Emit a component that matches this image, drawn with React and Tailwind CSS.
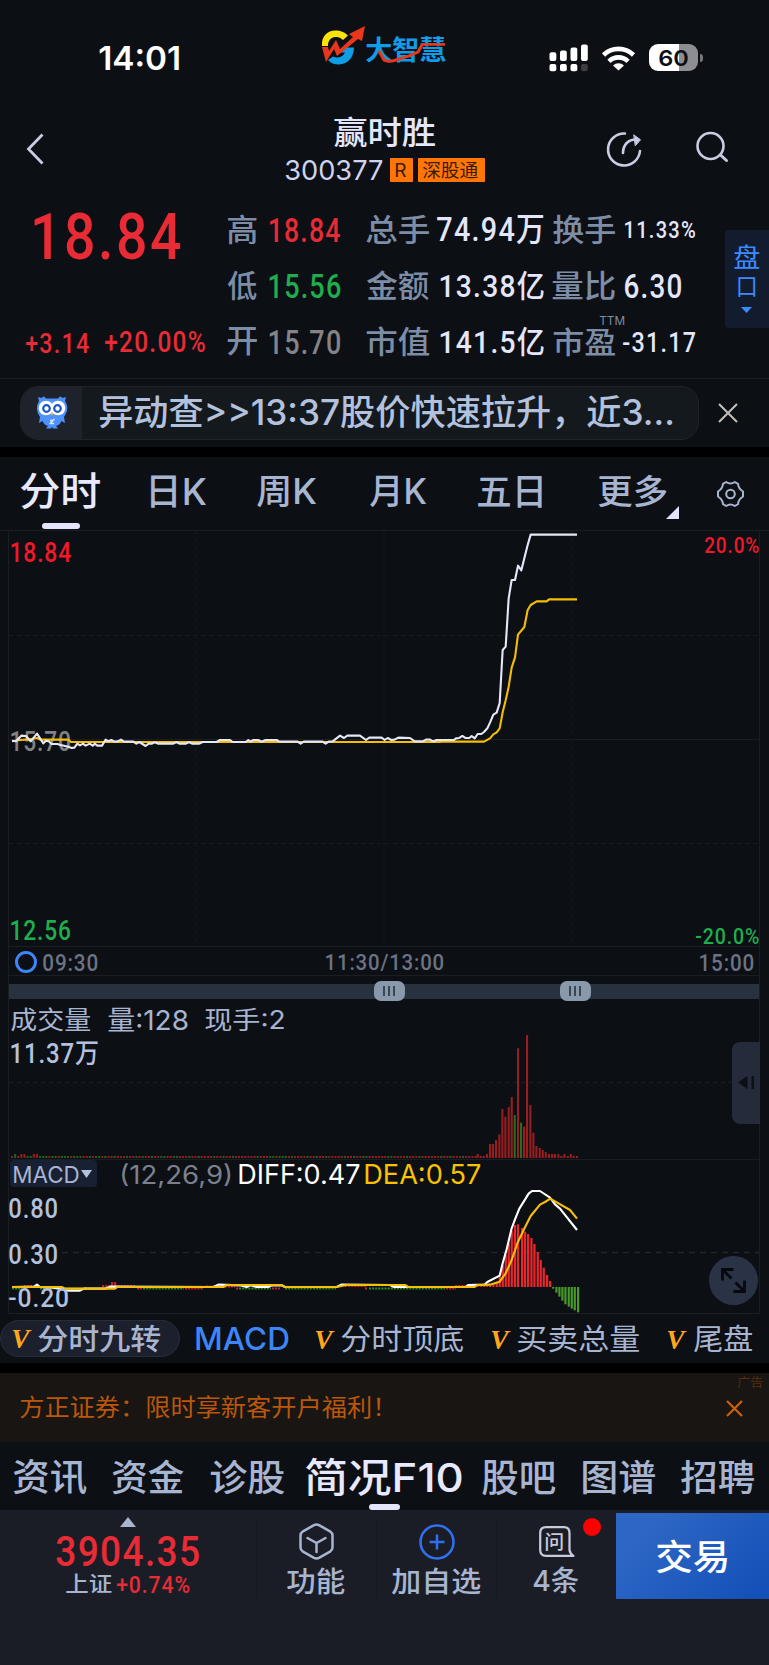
import { useLayoutEffect, useRef } from "react";

const DIN = "font-['Roboto','Noto_Sans_CJK_SC',sans-serif]";
const SF = "font-['Inter','Noto_Sans_CJK_SC',sans-serif]";

// Text whose glyphs are fitted to the box given by the width and height classes.
function Ink({ children, className = "", font = SF }) {
  const box = useRef(null);
  const text = useRef(null);
  useLayoutEffect(() => {
    const cs = getComputedStyle(text.current);
    const ctx = document.createElement("canvas").getContext("2d");
    ctx.font = `${cs.fontStyle} ${cs.fontWeight} ${cs.fontSize} ${cs.fontFamily}`;
    if (cs.letterSpacing !== "normal") ctx.letterSpacing = cs.letterSpacing;
    const m = ctx.measureText(children);
    const size = parseFloat(cs.fontSize);
    const asc = m.fontBoundingBoxAscent;
    const base = (size - asc - m.fontBoundingBoxDescent) / 2 + asc;
    const left = -m.actualBoundingBoxLeft;
    const sx = box.current.clientWidth / (m.actualBoundingBoxRight - left);
    const sy = box.current.clientHeight / (m.actualBoundingBoxAscent + m.actualBoundingBoxDescent);
    const top = base - m.actualBoundingBoxAscent;
    text.current.style.transform = `matrix(${sx},0,0,${sy},${-left * sx - 0.8},${-top * sy})`;
  }, [children]);
  return (
    <span ref={box} className={`block shrink-0 leading-none whitespace-nowrap ${font} ${className}`}>
      <span ref={text} className="block w-max origin-top-left">{children}</span>
    </span>
  );
}

function StatusBar() {
  return (
    <div className="flex h-[115px] shrink-0 items-center pl-[100px]">
      <Ink className="h-[24px] w-[79.500px] text-[33px] font-semibold text-white">14:01</Ink>
      <svg className="mt-[25px] ml-[141.500px] h-[40px] w-[45px] shrink-0 self-start" viewBox="0 0 45 40">
        <path d="M1 21 C0 11 7 5.500 14 5.500 C20 5.500 24 7.500 27 10.500 L22 15 C19.500 12.500 17 11.500 14 12 C9.500 12.500 7 16 7 21 Z" fill="#fde30a" />
        <path d="M7 35 L12 31.500 C16 34 22 32 24 27.500 L18.500 27.500 L22 22.500 L33 22.500 C33 32 27 39 18 39.500 C13.500 39.500 9.500 38 7 35 Z" fill="#109de8" />
        <path d="M1 22 L7 22 L8 26 L15 15 L19 24 L32 12 L28 9 L44 1 L41 16 L37 14 L16 31 L13 24 L5 37 Z" fill="#e8371c" />
      </svg>
      <div className="relative mt-[36px] ml-[-0.500px] h-[27px] w-[81px] shrink-0 self-start">
        <Ink className="h-[27px] w-[81px] text-[27px] font-bold text-[#109de8]">大智慧</Ink>
        <svg className="absolute top-0 left-0 h-[28px] w-[82px]" viewBox="0 0 82 28">
          <path d="M13 15 L18 24 Q22 26.500 30 24 Q44 20 52 16 L56 9" fill="none" stroke="#e8371c" strokeWidth="3" />
          <path d="M55 8.500 H79" stroke="#e8371c" strokeWidth="2.500" />
        </svg>
      </div>
      <svg className="ml-[102.500px] h-[28px] w-[40px] shrink-0" viewBox="551 43.500 40 28">
        <g fill="#fff">
          <rect x="551.500" y="51.700" width="6.800" height="8.800" rx="2" />
          <rect x="562" y="50" width="6.800" height="10.500" rx="2" />
          <rect x="572.500" y="47" width="6.800" height="13.500" rx="2" />
          <rect x="583" y="44" width="6.800" height="16.500" rx="2" />
          <rect x="551.500" y="63.500" width="6.800" height="7.200" rx="2" />
          <rect x="562" y="63.500" width="6.800" height="7.200" rx="2" />
          <rect x="572.500" y="63.500" width="6.800" height="7.200" rx="2" />
        </g>
        <rect x="583" y="63.500" width="6.800" height="7.200" rx="2" fill="#3b3d41" />
      </svg>
      <svg className="ml-[12px] h-[26px] w-[35px] shrink-0" viewBox="603 44.500 35 26">
        <g fill="none" stroke="#fff" strokeWidth="4.600">
          <path d="M605.500 54.500 A 21.500 21.500 0 0 1 635.500 54.500" />
          <path d="M611 60.800 A 13.500 13.500 0 0 1 630 60.800" />
        </g>
        <path d="M615 65 A 8 8 0 0 1 626 65 L620.500 70 Z" fill="#fff" />
      </svg>
      <div className="relative ml-[13px] flex h-[27px] w-[49px] shrink-0 items-center rounded-[9px] bg-[linear-gradient(90deg,#fff_61%,#8d8e91_61%)] pl-[10.500px]">
        <Ink className="h-[16px] w-[29px] text-[22px] font-semibold text-[#0c0f14]">60</Ink>
      </div>
      <div className="ml-[2px] h-[8px] w-[3px] rounded-r-full bg-[#77787b]" />
    </div>
  );
}

function TitleBar() {
  return (
    <div className="flex h-[68px] shrink-0 items-center">
      <svg className="ml-[26px] h-[32px] w-[18px] shrink-0" viewBox="0 0 18 32" fill="none" stroke="#c9cde3" strokeWidth="2.800">
        <path d="M16.500 1.500 L2.500 16 L16.500 30.500" />
      </svg>
      <div className="ml-[242px] flex h-[68px] w-[199px] shrink-0 flex-col items-center pt-[1px]">
        <Ink className="h-[32px] w-[101px] text-[34px] font-medium text-[#e4e6fb]">赢时胜</Ink>
        <div className="mt-[10px] flex w-[199px] items-center">
          <Ink className="h-[20px] w-[96.500px] text-[27px] text-[#cfd4ee]">300377</Ink>
          <span className="ml-[7px] flex h-[24px] w-[23.500px] shrink-0 items-center justify-center rounded-[1px] bg-[#ff7606]">
            <Ink className="h-[14px] w-[10.500px] text-[19px] text-[#3a1c04]">R</Ink>
          </span>
          <span className="ml-[5px] flex h-[24px] w-[66.500px] shrink-0 items-center justify-center rounded-[1px] bg-[#ff7606]">
            <Ink className="h-[18px] w-[56px] text-[19px] text-[#3a1c04]">深股通</Ink>
          </span>
        </div>
      </div>
      <svg className="ml-[119.500px] h-[37px] w-[38px] shrink-0" viewBox="0 0 38 37" fill="none" stroke="#c9cde3" strokeWidth="2.600" strokeLinecap="round">
        <path d="M20 2.500 A 16 16 0 1 0 35 20" />
        <path d="M18 22 C18 14 23 8.500 31 8.500" />
        <path d="M29 4 L35.500 8.800 L30.500 14.500 Z" fill="#c9cde3" strokeWidth="1" />
      </svg>
      <svg className="mt-[-5px] ml-[52px] h-[32px] w-[34px] shrink-0" viewBox="0 0 34 32" fill="none" stroke="#c9cde3" strokeWidth="2.600" strokeLinecap="round">
        <circle cx="15.500" cy="15" r="13" />
        <path d="M25.500 24 L31.500 29.500" strokeWidth="3" />
      </svg>
    </div>
  );
}

const LABEL = "text-[#7d8da6] text-[31px] font-medium";
const VAL = "text-[34px] font-medium tracking-[1.500px]";

function Quote() {
  return (
    <div className="flex h-[195px] shrink-0 pt-[18.500px]">
      <div className="w-[228px] shrink-0 pt-[9px] pl-[26px]">
        <Ink font={DIN} className="ml-[9px] h-[48.500px] w-[146px] text-[66px] font-medium tracking-[3px] text-[#e82b34]">18.84</Ink>
        <div className="mt-[73px] flex items-center">
          <Ink font={DIN} className="h-[20px] w-[63.500px] text-[28px] font-medium tracking-[1.500px] text-[#e82b34]">+3.14</Ink>
          <Ink font={DIN} className="ml-[15.500px] h-[21px] w-[101px] text-[28px] font-medium tracking-[1.500px] text-[#e82b34]">+20.00%</Ink>
        </div>
      </div>
      <div className="flex w-[497px] shrink-0 flex-col">
        <div className="flex h-[56px] items-center">
          <Ink className={`h-[31px] w-[30px] ${LABEL}`}>高</Ink>
          <Ink font={DIN} className={`ml-[11.500px] h-[24px] w-[71px] text-[#e82b34] ${VAL}`}>18.84</Ink>
          <Ink className={`ml-[26px] h-[31px] w-[62.500px] ${LABEL}`}>总手</Ink>
          <Ink font={DIN} className={`ml-[8.500px] h-[29.500px] w-[106px] text-[#e4e6fb] ${VAL}`}>74.94万</Ink>
          <Ink className={`ml-[9.500px] h-[31px] w-[63px] ${LABEL}`}>换手</Ink>
          <Ink font={DIN} className="ml-[9.500px] h-[17px] w-[70px] text-[24px] font-medium tracking-[1.500px] text-[#e4e6fb]">11.33%</Ink>
        </div>
        <div className="flex h-[56px] items-center">
          <Ink className={`h-[31px] w-[30px] ${LABEL}`}>低</Ink>
          <Ink font={DIN} className={`ml-[11.500px] h-[24px] w-[71px] text-[#1fae4d] ${VAL}`}>15.56</Ink>
          <Ink className={`ml-[26px] h-[31px] w-[62.500px] ${LABEL}`}>金额</Ink>
          <Ink font={DIN} className={`ml-[11.500px] h-[30.500px] w-[104px] text-[#e4e6fb] ${VAL}`}>13.38亿</Ink>
          <Ink className={`ml-[8.500px] h-[31px] w-[63px] ${LABEL}`}>量比</Ink>
          <Ink font={DIN} className={`ml-[9px] h-[24px] w-[56.500px] text-[#e4e6fb] ${VAL}`}>6.30</Ink>
        </div>
        <div className="relative flex h-[56px] items-center">
          <Ink className={`h-[29px] w-[30px] ${LABEL}`}>开</Ink>
          <Ink font={DIN} className={`ml-[11.500px] h-[24px] w-[71px] text-[#838388] ${VAL}`}>15.70</Ink>
          <Ink className={`ml-[26px] h-[31px] w-[62.500px] ${LABEL}`}>市值</Ink>
          <Ink font={DIN} className={`ml-[11.500px] h-[30.500px] w-[104px] text-[#e4e6fb] ${VAL}`}>141.5亿</Ink>
          <Ink className={`ml-[9.500px] h-[30px] w-[61.500px] ${LABEL}`}>市盈</Ink>
          <Ink font={DIN} className="ml-[8.500px] h-[20px] w-[71.500px] text-[28px] font-medium tracking-[1.500px] text-[#e4e6fb]">-31.17</Ink>
          <div className="absolute top-[2px] left-[371.500px]">
            <Ink className="h-[9px] w-[25px] text-[12px] text-[#7d8da6]">TTM</Ink>
          </div>
        </div>
      </div>
      <div className="mt-[28.500px] flex h-[98px] w-[44px] shrink-0 flex-col items-center rounded-l-[4px] bg-[#131c2f] pt-[14px]">
        <Ink className="h-[25px] w-[24.500px] text-[26px] text-[#3b8bff]">盘</Ink>
        <Ink className="mt-[8px] h-[19.500px] w-[16.500px] text-[26px] text-[#3b8bff]">口</Ink>
        <svg className="mt-[10.500px] mr-px h-[6px] w-[11px]" viewBox="0 0 11 6"><path d="M0 0 H11 L5.500 6 Z" fill="#3b8bff" /></svg>
      </div>
    </div>
  );
}

function Owl() {
  return (
    <svg className="h-[33px] w-[32px]" viewBox="0 0 32 33">
      <path d="M2 1 L5 2 L8 0.500 L10 2.500 H22 L24 0.500 L27 2 L30 1 L29 5 Q32 9 31 15 Q29 19 28 21 L29 27 L25.500 25 Q24 29 20 30 L22 32.500 H17 L16 31 L15 32.500 H10 L12 30 Q8 29 6.500 25 L3 27 L4 21 Q1 17 1 13 Q1 8 3 5 Z" fill="#4d92ff" />
      <circle cx="10" cy="12" r="7.300" fill="#fff" /><circle cx="22" cy="12" r="7.300" fill="#fff" />
      <circle cx="10.500" cy="12.500" r="3.300" fill="#fff" stroke="#1b55c9" strokeWidth="2.200" />
      <circle cx="21.500" cy="12.500" r="3.300" fill="#fff" stroke="#1b55c9" strokeWidth="2.200" />
      <path d="M14.500 17 H17.500 L16 20 Z" fill="#ffb03a" />
      <path d="M13.500 28 L18.500 23 M14 24.500 H17 M15 27.500 H18" stroke="#dbe8ff" strokeWidth="1.400" />
    </svg>
  );
}

function Notice() {
  return (
    <div className="flex h-[69px] shrink-0 items-center border-t border-[#1a1d22] pb-px pl-[20px]">
      <div className="flex h-[54px] w-[679px] shrink-0 items-center overflow-hidden rounded-[18px] border border-[#1f2429] bg-[#14191d]">
        <div className="flex h-full w-[61px] shrink-0 items-center justify-center bg-[#1e222b]"><Owl /></div>
        <Ink className="ml-[17.500px] h-[35.500px] w-[574px] text-[34px] font-medium text-[#b3c1dd]">异动查&gt;&gt;13:37股价快速拉升，近3...</Ink>
      </div>
      <svg className="ml-[19px] h-[20px] w-[20px]" viewBox="0 0 20 20" stroke="#c3c0bb" strokeWidth="2"><path d="M1 1 L19 19 M19 1 L1 19" /></svg>
    </div>
  );
}

const PERIOD = "text-[36px] font-medium text-[#a8b5d1]";
function Periods() {
  return (
    <div className="relative flex h-[73px] shrink-0 items-start pl-[20.500px]">
      <div className="flex flex-col items-center pt-[15px]">
        <Ink className="h-[38px] w-[79.500px] text-[40px] font-medium text-[#e8e9fd]">分时</Ink>
        <div className="mt-[13px] ml-[2px] h-[6px] w-[38px] rounded-full bg-[#e4e4fb]" />
      </div>
      <Ink className={`mt-[18px] ml-[52px] h-[33px] w-[55px] ${PERIOD}`}>日K</Ink>
      <Ink className={`mt-[18px] ml-[51px] h-[33px] w-[59px] ${PERIOD}`}>周K</Ink>
      <Ink className={`mt-[18px] ml-[53px] h-[33px] w-[57px] ${PERIOD}`}>月K</Ink>
      <Ink className={`mt-[18.500px] ml-[50.500px] h-[32px] w-[65px] ${PERIOD}`}>五日</Ink>
      <Ink className={`mt-[17px] ml-[56px] h-[34px] w-[69px] ${PERIOD}`}>更多</Ink>
      <svg className="mt-[48.500px] ml-[-1.500px] h-[13px] w-[13px]" viewBox="0 0 13 13"><path d="M13 0 V13 H0 Z" fill="#e4e4fb" /></svg>
      <svg className="mt-[23px] ml-[36.500px] h-[28px] w-[29px]" viewBox="0 0 29 28" fill="none" stroke="#a8b5d1" strokeWidth="2">
        <path strokeLinejoin="round" d="M10.200 2 Q14.500 5 18.800 2 L22 3.800 Q22.300 8.600 27 11.500 V16.500 Q22.300 19.400 22 24.200 L18.800 26 Q14.500 23 10.200 26 L7 24.200 Q6.700 19.400 2 16.500 V11.500 Q6.700 8.600 7 3.800 Z" />
        <circle cx="14.500" cy="14" r="4.300" />
      </svg>
    </div>
  );
}

function PriceChart() {
  return (
    <div className="relative h-[416px] shrink-0">
      <svg className="block h-[416px] w-[769px]" viewBox="0 530 769 416" fill="none">
        <g stroke="#1a1e23">
          <path d="M0 530.500 H769 M8.500 530 V946 M759.500 530 V946 M9 739.500 H759" />
          <path d="M9 635.500 H759 M9 843.500 H759 M196 531 V946 M384 531 V946 M572 531 V946" strokeDasharray="4 4" stroke="#171b20" />
        </g>
      </svg>
      <div className="absolute top-[11.500px] left-[11.500px]"><Ink font={DIN} className="h-[19.500px] w-[60px] text-[28px] font-medium tracking-[1px] text-[#f0182a]">18.84</Ink></div>
      <div className="absolute top-[201px] left-[12px]"><Ink font={DIN} className="h-[19.500px] w-[59px] text-[28px] font-medium tracking-[1px] text-[#808186]">15.70</Ink></div>
      <div className="absolute top-[390px] left-[12px]"><Ink font={DIN} className="h-[20px] w-[59px] text-[28px] font-medium tracking-[1px] text-[#1fae4d]">12.56</Ink></div>
      <div className="absolute top-[7px] left-[705px]"><Ink font={DIN} className="h-[16px] w-[55px] text-[22px] font-medium tracking-[1px] text-[#f0182a]">20.0%</Ink></div>
      <div className="absolute top-[398px] left-[696px]"><Ink font={DIN} className="h-[15.500px] w-[64px] text-[22px] font-medium tracking-[1px] text-[#1fae4d]">-20.0%</Ink></div>
      <svg className="absolute top-0 left-0 h-[416px] w-[769px]" viewBox="0 530 769 416" fill="none" strokeWidth="6.300" strokeLinejoin="round">
        <g stroke="#f5be00">
          <path transform="translate(0 700) scale(.33333)" d="M36 124 60 120 90 118 111 114 120 119 205 119 213 126 1322 126" />
          <path transform="translate(440 520) scale(.33333)" d="M0 665 132 665 150 655 160 643 170 637 179 625 188 577 197 541 206 500 215 443 225 412 234 344 253 321 263 270 272 255 290 244 320 244 327 238 411 238" />
        </g>
        <g stroke="#e6e8fa">
          <path transform="translate(0 700) scale(.33333)" d="M36 122 48 124 64 107 78 108 92 124 111 101 130 130 138 122 146 124 155 132 172 132 182 135 205 140 215 144 223 143 232 131 240 136 249 131 257 137 269 131 278 137 284 131 292 137 306 137 317 119 325 124 334 120 344 125 353 124 363 119 372 125 400 125 409 131 418 126 437 138 446 131 455 131 464 127 475 131 520 131 530 126 538 131 558 131 567 126 576 131 598 131 608 126 650 126 660 120 690 120 698 126 737 126 745 120 752 125 760 120 775 120 784 125 797 120 830 120 838 125 893 125 902 131 911 125 968 125 977 131 986 125 998 124 1020 107 1032 114 1042 107 1080 107 1098 120 1108 113 1145 113 1154 120 1163 114 1174 120 1184 119 1195 113 1230 114 1244 124 1268 124 1278 119 1290 119 1300 124 1310 120 1322 120" />
          <path transform="translate(440 520) scale(.33333)" d="M0 660 42 660 48 655 58 654 67 648 76 654 88 654 95 648 104 655 113 642 124 642 132 636 142 625 150 608 160 584 170 578 179 549 188 390 197 380 206 235 215 180 225 180 234 137 244 151 253 115 263 75 272 44 411 44" />
        </g>
      </svg>
    </div>
  );
}

function Handle({ className }) {
  return (
    <div className={`flex h-[20.500px] w-[30.500px] items-center justify-center gap-[3px] rounded-[7px] bg-[#8998aa] ${className}`}>
      <i className="h-[10px] w-[2px] bg-[#3b4655]" /><i className="h-[10px] w-[2px] bg-[#3b4655]" /><i className="h-[10px] w-[2px] bg-[#3b4655]" />
    </div>
  );
}

function TimeAxis() {
  return (
    <div className="mr-[9px] ml-[8px] h-[56px] shrink-0 border-x border-t border-[#1a1e23]">
      <div className="flex h-[29px] items-center border-b border-[#1a1e23] pt-[2px] pl-[6px]">
        <span className="mt-[-1px] h-[22px] w-[22px] shrink-0 rounded-full border-[3px] border-[#3d86f7]" />
        <Ink font={DIN} className="ml-[7px] h-[17.500px] w-[53.500px] text-[25px] font-medium tracking-[1px] text-[#6b7384]">09:30</Ink>
        <Ink font={DIN} className="ml-[229px] h-[18px] w-[116.500px] text-[25px] font-medium tracking-[1px] text-[#6b7384]">11:30/13:00</Ink>
        <Ink font={DIN} className="ml-[258px] h-[17.500px] w-[52.500px] text-[25px] font-medium tracking-[1px] text-[#6b7384]">15:00</Ink>
      </div>
      <div className="mt-[7.500px] flex h-[15px] items-center bg-[#28323e]">
        <Handle className="ml-[365px]" />
        <Handle className="ml-[155.500px]" />
      </div>
    </div>
  );
}

const PEAKS = [
  [326, 702], [335, 708], [344, 708], [354, 702], [363, 672], [372, 672], [381, 660], [391, 643], [400, 567], [409, 590], [419, 561],
  [428, 531], [437, 585, 1], [447, 385], [456, 608, 1], [465, 620], [474, 345], [484, 555], [493, 638], [502, 678], [512, 684],
  [521, 690], [530, 696], [540, 702], [549, 702], [558, 702], [568, 702], [577, 708], [586, 702], [596, 708], [605, 702], [614, 708], [624, 708],
];
const FLAT = "rgrrrggrrgggrggrgggrgggrrgrggrgrrgrrrgrrgrgrrgrrggrrggrrrgrrgrrrrgrrgrrgrrrrrrrgrrrggrgggrgrrrrgrrgrrgrrrrrgrrgrrggrrrrrrggrrrrgrrrgrrrrrrgrrgrrrgrrrrgrr";
const TALL = [1, 3, 4, 7, 8];

function Volume() {
  return (
    <div className="relative h-[158px] shrink-0">
      <svg className="block h-[158px] w-[769px]" viewBox="0 1002 769 158" fill="none">
        <path d="M8.500 1002 V1160 M759.500 1002 V1160 M8 1159.500 H760" stroke="#1a1e23" />
        <path d="M9 1082.500 H759" stroke="#1a1e23" strokeDasharray="4 4" />
        {[...FLAT].map((c, i) =>
          11 + i * 3.11 < 475 ? (
            <rect key={i} x={11 + i * 3.11} y={TALL.includes(i) ? 1154 : 1156} width="2.100" height={TALL.includes(i) ? 4 : 2} fill={c === "r" ? "#8e1d20" : "#23601c"} />
          ) : null,
        )}
        {PEAKS.map(([x, y, g]) => (
          <rect key={x} x={368 + x / 3} y={920 + y / 3} width="2.100" height={(714 - y) / 3} fill={g ? "#2e6a1d" : "#971d20"} />
        ))}
      </svg>
      <div className="absolute top-[5px] left-[11px] flex items-center">
        <Ink className="h-[25px] w-[80px] text-[27px] text-[#a8b5d1]">成交量</Ink>
        <Ink className="ml-[18px] h-[25px] w-[80px] text-[27px] text-[#a8b5d1]">量:128</Ink>
        <Ink className="ml-[16.500px] h-[25px] w-[78.500px] text-[27px] text-[#a8b5d1]">现手:2</Ink>
      </div>
      <div className="absolute top-[39px] left-[12px]"><Ink font={DIN} className="h-[25px] w-[86.500px] text-[28px] font-medium tracking-[1px] text-[#b3c1dd]">11.37万</Ink></div>
      <div className="absolute top-[39.500px] left-[731.500px] flex h-[82px] w-[28px] items-center rounded-l-[8px] bg-[#252b3a] pl-[6.500px]">
        <svg className="h-[13px] w-[17px]" viewBox="0 0 17 13"><path d="M0 6.500 L9.500 0 V13 Z M13.500 0 H16 V13 H13.500 Z" fill="#0c0f14" /></svg>
      </div>
    </div>
  );
}

const MACD_BARS = [
  [150, 437], [160, 433], [170, 425], [179, 410], [188, 375], [197, 345], [206, 310], [215, 272], [225, 255], [234, 253], [246, 264], [255, 275],
  [264, 282], [274, 294], [283, 312], [293, 336], [302, 360], [311, 383], [321, 405], [330, 423], [339, 446], [349, 458], [358, 470], [367, 482],
  [376, 493], [386, 500], [395, 506], [404, 511], [414, 517],
];

function Macd() {
  return (
    <div className="relative h-[154px] shrink-0">
      <svg className="block h-[154px] w-[769px]" viewBox="0 1160 769 154" fill="none">
        <path d="M8.500 1160 V1314 M759.500 1160 V1314 M8 1313.500 H760" stroke="#1a1e23" />
        <path d="M62 1252.500 H759" stroke="#21262b" strokeWidth="1.500" strokeDasharray="6 5" />
        <g strokeWidth="2" strokeDasharray="2.100 1">
          <path d="M24 1286 H32 M102 1286 H135 M206 1286.500 H235 M345 1286 H366 M455 1286 H490" stroke="#c3242a" />
          <path d="M111 1284 H117" stroke="#c3242a" strokeWidth="4" />
          <path d="M137 1288.500 H142 M185 1288.500 H203 M236 1288.500 H239 M272 1288.500 H280 M365 1288.500 H368 M446 1288.500 H456" stroke="#c3242a" />
          <path d="M12 1288.500 H22 M40 1288.500 H86 M143 1288.500 H184 M239 1288.500 H271 M285 1288.500 H336 M369 1288.500 H445" stroke="#2f8a25" />
        </g>
        {MACD_BARS.map(([x, y]) => (
          <rect key={x} x={439 + x / 3} y={y < 441 ? 1140 + y / 3 : 1287} width="2.200" height={Math.abs(441 - y) / 3} fill={y < 441 ? "#ea262b" : "#46992a"} />
        ))}
        <g strokeWidth="6.300" strokeLinejoin="round">
          <path stroke="#fff" transform="translate(0 1200) scale(.33333)" d="M36 261 102 260 111 254 120 261 160 263 180 266 205 272 240 272 252 266 315 266 330 260 640 261 655 254 720 256 740 261 752 256 770 261 805 261 815 256 845 256 855 261 1010 261 1024 254 1170 255 1182 261 1320 261" />
          <path stroke="#fff" transform="translate(440 1140) scale(.33333)" d="M0 441 78 441 84 435 133 434 142 426 179 407 188 370 200 328 215 265 225 238 238 206 253 182 266 161 276 153 300 153 330 173 345 193 360 206 411 270" />
          <path stroke="#f7be0a" transform="translate(0 1200) scale(.33333)" d="M36 261 185 261 195 266 345 266 352 261 670 261 680 255 845 255 855 261 1010 261 1040 255 1215 255 1225 261 1322 261" />
          <path stroke="#f7be0a" transform="translate(440 1140) scale(.33333)" d="M0 441 104 441 112 435 150 434 179 425 197 400 215 360 234 305 255 262 272 228 300 194 315 186 331 176 345 184 390 210 411 236" />
        </g>
      </svg>
      <div className="absolute top-0 left-[10px] flex h-[27px] items-center">
        <div className="flex h-[27px] w-[87px] shrink-0 items-center rounded-[4px] bg-[#182033] pt-px pl-[5px]">
          <Ink className="h-[17px] w-[65px] text-[23px] text-[#a8b5d1]">MACD</Ink>
          <svg className="mt-[-1px] ml-[0.500px] h-[8px] w-[11px]" viewBox="0 0 11 8"><path d="M0 0 H11 L5.500 8 Z" fill="#b3c1dd" /></svg>
        </div>
        <Ink className="mt-[5px] ml-[25px] h-[25px] w-[108.500px] text-[27px] text-[#7b818c]">(12,26,9)</Ink>
        <Ink className="mt-[1px] ml-[9px] h-[20px] w-[119.500px] text-[27px] text-white">DIFF:0.47</Ink>
        <Ink className="mt-[1px] ml-[7px] h-[20px] w-[115px] text-[27px] text-[#f8c200]">DEA:0.57</Ink>
      </div>
      <div className="absolute top-[37.500px] left-[9.500px]"><Ink font={DIN} className="h-[19.500px] w-[47.500px] text-[28px] font-medium tracking-[1px] text-[#b3c1dd]">0.80</Ink></div>
      <div className="absolute top-[84px] left-[9.500px]"><Ink font={DIN} className="h-[19.500px] w-[47.500px] text-[28px] font-medium tracking-[1px] text-[#b3c1dd]">0.30</Ink></div>
      <div className="absolute top-[128px] left-[9.500px]"><Ink font={DIN} className="h-[19px] w-[59px] text-[28px] font-medium tracking-[1px] text-[#b3c1dd]">-0.20</Ink></div>
      <div className="absolute top-[96px] left-[709px] flex h-[49px] w-[49px] items-center justify-center rounded-full bg-[#2a3345]">
        <svg className="h-[25px] w-[25px]" viewBox="0 0 25 25" fill="none" stroke="#07090c" strokeWidth="2.800">
          <path d="M12.500 1.500 H1.500 V12.500 M2 2 L10.500 10.500 M12.500 23.500 H23.500 V12.500 M23 23 L14.500 14.500" />
        </svg>
      </div>
    </div>
  );
}

function VMark({ className = "" }) {
  return (
    <Ink font="font-['Liberation_Serif',serif]" className={`h-[17.500px] w-[19.500px] text-[26px] font-bold text-[#ffa51e] italic ${className}`}>V</Ink>
  );
}

const IND = "h-[28.500px] text-[30px] text-[#a8b5d1] mt-[2px]";
function Indicators() {
  return (
    <div className="flex h-[49px] shrink-0 items-center pb-px">
      <div className="flex h-[37px] w-[180px] shrink-0 items-center rounded-full border border-[#262d3a] bg-[#1b202c] pl-[12px]">
        <VMark className="mt-[4px]" />
        <Ink className={`ml-[6.500px] w-[122px] font-medium ${IND}`}>分时九转</Ink>
      </div>
      <Ink className="mt-px ml-[16.500px] h-[22.500px] w-[91.500px] text-[30px] font-medium text-[#3d86f7]">MACD</Ink>
      <VMark className="mt-[5px] ml-[28px]" />
      <Ink className={`ml-[6.500px] w-[122px] ${IND}`}>分时顶底</Ink>
      <VMark className="mt-[5px] ml-[28px]" />
      <Ink className={`ml-[6.500px] w-[122px] ${IND}`}>买卖总量</Ink>
      <VMark className="mt-[5px] ml-[27.500px]" />
      <Ink className={`ml-[6.500px] w-[59px] ${IND}`}>尾盘</Ink>
    </div>
  );
}

function Ad() {
  return (
    <div className="flex h-[69px] shrink-0 items-start bg-[#191512] pl-[21px]">
      <Ink className="mt-[22px] h-[24px] w-[360px] text-[25px] text-[#b9570a]">方正证券：限时享新客开户福利！</Ink>
      <svg className="mt-[27px] ml-[345px] h-[17px] w-[17px] shrink-0" viewBox="0 0 17 17" stroke="#cc610a" strokeWidth="2.200"><path d="M1 1 L16 16 M16 1 L1 16" /></svg>
      <Ink className="mt-[4px] ml-[-5.500px] h-[12.500px] w-[26px] text-[13px] text-[#552c10]">广告</Ink>
    </div>
  );
}

const SEC = "h-[35.500px] text-[37px] font-medium text-[#a8b5d1]";
function Sections() {
  return (
    <div className="flex h-[68px] shrink-0 items-start pl-[14px]">
      <Ink className={`mt-[17px] w-[73px] ${SEC}`}>资讯</Ink>
      <Ink className={`mt-[17px] ml-[26px] w-[72px] ${SEC}`}>资金</Ink>
      <Ink className={`mt-[17px] ml-[26px] w-[73.500px] ${SEC}`}>诊股</Ink>
      <div className="ml-[21.500px] flex shrink-0 flex-col pt-[15px]">
        <Ink className="h-[40px] w-[156.500px] text-[41px] font-medium text-[#e8e9fd]">简况F10</Ink>
        <div className="mt-[7px] ml-[62.500px] h-[6px] w-[31px] rounded-full bg-[#e4e4fb]" />
      </div>
      <Ink className={`mt-[17px] ml-[20.500px] w-[73px] ${SEC}`}>股吧</Ink>
      <Ink className={`mt-[17px] ml-[27px] w-[73px] ${SEC}`}>图谱</Ink>
      <Ink className={`mt-[17px] ml-[25px] w-[74px] ${SEC}`}>招聘</Ink>
    </div>
  );
}

const ACT = "h-[28px] text-[30px] font-medium text-[#a8b5d1]";
function BottomBar() {
  return (
    <div className="flex h-[155px] shrink-0 items-start bg-[#1b1d26]">
      <div className="flex w-[256px] shrink-0 flex-col items-center pt-[7px]">
        <svg className="h-[10px] w-[16px]" viewBox="0 0 16 10"><path d="M8 0 L16 10 H0 Z" fill="#a8b5d1" /></svg>
        <Ink font={DIN} className="mt-[9px] h-[31px] w-[143px] text-[42px] font-medium tracking-[1.500px] text-[#e82b34]">3904.35</Ink>
        <div className="mt-[6px] flex items-center">
          <Ink className="h-[21px] w-[45.500px] text-[22px] font-medium text-[#a8b5d1]">上证</Ink>
          <Ink font={DIN} className="mt-[2px] ml-[5px] h-[17px] w-[72.500px] text-[23px] font-medium tracking-[1px] text-[#e82b34]">+0.74%</Ink>
        </div>
      </div>
      <div className="mt-[10px] flex h-[78px] w-[120px] shrink-0 flex-col items-center border-l border-[#16181f] pt-[3px]">
        <svg className="h-[37px] w-[35px]" viewBox="0 0 35 37" fill="none" stroke="#a8b5d1" strokeWidth="2.500" strokeLinejoin="round" strokeLinecap="round">
          <path d="M15 2.200 Q17.500 1 20 2.200 L31 8.300 Q33.500 10 33.500 12.500 V24.500 Q33.500 27 31 28.700 L20 34.800 Q17.500 36 15 34.800 L4 28.700 Q1.500 27 1.500 24.500 V12.500 Q1.500 10 4 8.300 Z" />
          <path d="M8.500 15 L17.500 20 L26.500 15 M17.500 20 V29" />
        </svg>
        <Ink className={`mt-[7.500px] w-[58.500px] ${ACT}`}>功能</Ink>
      </div>
      <div className="mt-[10px] flex h-[78px] w-[120px] shrink-0 flex-col items-center border-l border-[#16181f] pt-[3.500px]">
        <svg className="h-[36px] w-[36px]" viewBox="0 0 36 36" fill="none" stroke="#2f6ff2" strokeWidth="2.500"><circle cx="18" cy="18" r="16.500" /><path d="M10.500 18 H25.500 M18 10.500 V25.500" /></svg>
        <Ink className={`mt-[8px] w-[89.500px] ${ACT}`}>加自选</Ink>
      </div>
      <div className="relative mt-[10px] flex h-[78px] w-[120px] shrink-0 flex-col items-center border-l border-[#16181f] pt-[6px]">
        <div className="relative flex h-[31px] w-[36px]">
          <svg className="h-[31px] w-[36px]" viewBox="0 0 36 31" fill="none" stroke="#c9cbdc" strokeWidth="2.200" strokeLinejoin="round"><path d="M7 1.200 H25 Q30.500 1.200 30.500 7 V24 Q31 27.500 34.500 29.800 H7 Q1.200 29.800 1.200 24 V7 Q1.200 1.200 7 1.200 Z" /></svg>
          <div className="absolute top-[6px] left-[7.500px]"><Ink className="h-[19px] w-[17.500px] text-[20px] font-medium text-[#c9cbdc]">问</Ink></div>
        </div>
        <Ink className={`mt-[10px] w-[45.500px] ${ACT}`}>4条</Ink>
        <span className="absolute top-[-2px] left-[86px] h-[18px] w-[18px] rounded-full bg-[#ff0000]" />
      </div>
      <div className="mt-[2.500px] flex h-[86px] w-[153px] shrink-0 items-center justify-center bg-[linear-gradient(135deg,#2d66c4_20%,#1350b7_95%)]">
        <Ink className="mt-[2px] mr-px h-[35px] w-[71px] text-[36px] font-medium text-white">交易</Ink>
      </div>
    </div>
  );
}

export default function App() {
  return (
    <div className="flex h-[1665px] w-[769px] flex-col overflow-hidden bg-[#0c0f14]">
      <StatusBar />
      <TitleBar />
      <Quote />
      <Notice />
      <div className="h-[10px] shrink-0 bg-black" />
      <Periods />
      <PriceChart />
      <TimeAxis />
      <Volume />
      <Macd />
      <Indicators />
      <div className="h-[10px] shrink-0 bg-black" />
      <Ad />
      <Sections />
      <BottomBar />
    </div>
  );
}
